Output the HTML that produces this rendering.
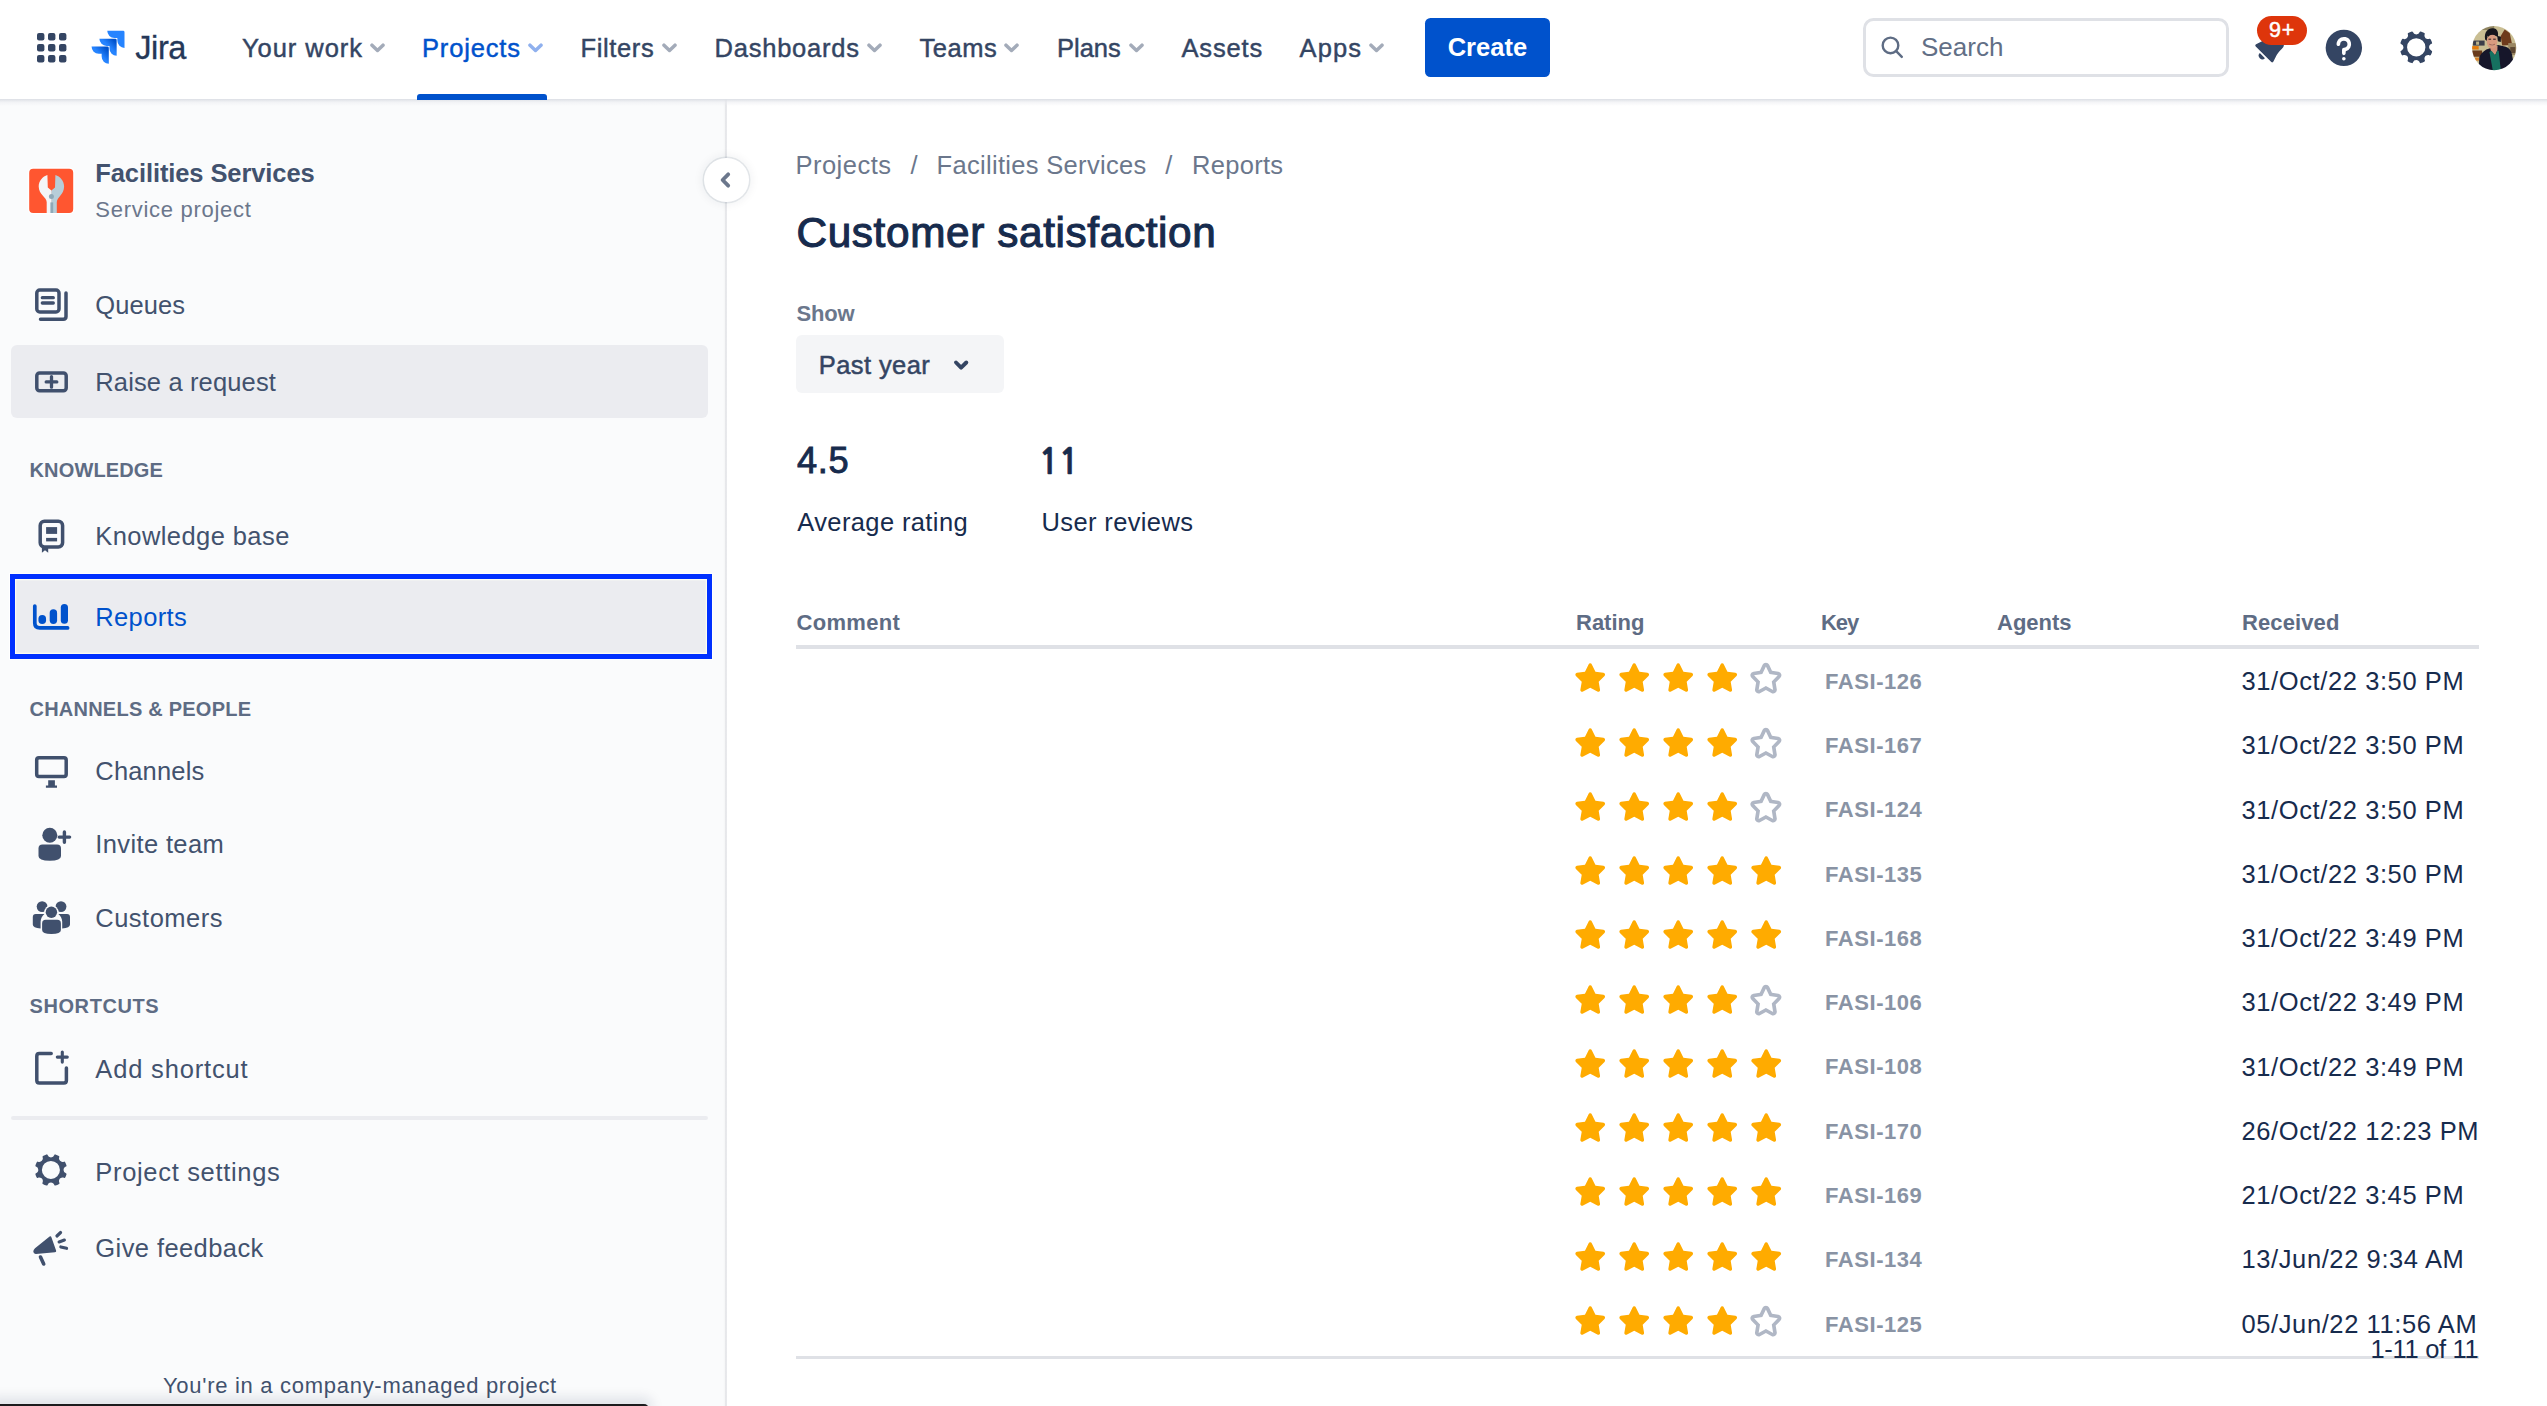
<!DOCTYPE html>
<html lang="en">
<head>
<meta charset="utf-8">
<title>Customer satisfaction - Facilities Services - Jira</title>
<style>
*{box-sizing:border-box;margin:0;padding:0}
html,body{width:2547px;height:1406px;overflow:hidden;background:#fff}
body{font-family:"Liberation Sans",Arial,sans-serif;color:#172B4D;position:relative}
.abs{position:absolute;white-space:nowrap;line-height:1}
svg{display:block;position:absolute;overflow:visible}

/* ---------- top navigation ---------- */
#nav{position:absolute;left:0;top:0;width:2547px;height:99px;background:#fff;z-index:5}
#navshadow{position:absolute;left:0;top:99px;width:2547px;height:7px;background:linear-gradient(#dcdfe5,rgba(235,236,240,.55) 45%,rgba(244,245,247,0));z-index:4}
.nv{position:absolute;top:32.6px;font-size:25.5px;font-weight:400;color:#344563;white-space:nowrap;line-height:30px;-webkit-text-stroke:.45px currentColor}
.nv.sel{color:#0052CC}
.chev{position:absolute;top:43px;width:15px;height:10px}
#create{position:absolute;left:1425px;top:18.2px;width:124.8px;height:58.4px;border-radius:5.5px;background:#0052CC;color:#fff;font-size:25.5px;font-weight:700;line-height:59px;text-align:center}
#search{position:absolute;left:1863px;top:18.2px;width:366px;height:58.9px;border:3.3px solid #DFE1E6;border-radius:10.5px;background:#fff}
#search span{position:absolute;left:55px;top:11px;font-size:26px;line-height:30px;color:#626F86;letter-spacing:0}

/* ---------- sidebar ---------- */
#side{position:absolute;left:0;top:98px;width:725px;height:1308px;background:#FAFBFC}
#sideborder{position:absolute;left:723px;top:98px;width:4px;height:1308px;background:linear-gradient(90deg,#FAFBFC,#f5f6f7 48%,#e6e7ea 56%,#e8e9ec 90%,#fff)}
.si{position:absolute;left:95.3px;font-size:25.5px;line-height:30px;color:#42526E;white-space:nowrap}
.sh{position:absolute;left:29.5px;font-size:20px;line-height:24px;font-weight:700;color:#5E6C84;letter-spacing:.6px;white-space:nowrap}
.hl{position:absolute;left:11px;width:697px;background:#EBECF0;border-radius:6px}

/* ---------- main ---------- */
.bc{position:absolute;top:150px;font-size:25.5px;line-height:30px;color:#6B778C;white-space:nowrap}
.th{position:absolute;top:610px;font-size:21px;line-height:24px;font-weight:700;color:#5E6C84;white-space:nowrap}
.row{position:absolute;left:796px;width:1682px;height:64px}
.key{position:absolute;left:1028px;top:20px;font-size:21.5px;line-height:24px;font-weight:700;color:#8993A4;white-space:nowrap}
.rc{position:absolute;left:1445px;top:17px;font-size:25.5px;line-height:30px;color:#172B4D;white-space:nowrap}
.star{position:absolute;top:14px;width:36px;height:36px}
</style>
</head>
<body>

<!-- NAV -->
<div id="nav">

<svg width="0" height="0" style="position:absolute"><defs>
<symbol id="chev" viewBox="0 0 15 10"><path d="M2 2.2 L7.5 7.4 L13 2.2" fill="none" stroke="currentColor" stroke-width="3.5" stroke-linecap="round" stroke-linejoin="round"/></symbol>
<linearGradient id="jg1" x1="21.1" y1="10.8" x2="16.5" y2="15.5" gradientUnits="userSpaceOnUse"><stop offset=".18" stop-color="#0052CC"/><stop offset="1" stop-color="#2684FF"/></linearGradient>
<linearGradient id="jg2" x1="16.1" y1="16.2" x2="10.8" y2="21.3" gradientUnits="userSpaceOnUse"><stop offset=".18" stop-color="#0052CC"/><stop offset="1" stop-color="#2684FF"/></linearGradient>
<symbol id="gear" viewBox="0 0 24 24"><path d="M11.701 16.7a5.002 5.002 0 1 1 0-10.003 5.002 5.002 0 0 1 0 10.004m8.368-3.117a1.995 1.995 0 0 1-1.346-1.885c0-.876.563-1.613 1.345-1.885a.48.48 0 0 0 .315-.574 8.947 8.947 0 0 0-.836-1.993.477.477 0 0 0-.598-.195 2.04 2.04 0 0 1-1.29.08 1.988 1.988 0 0 1-1.404-1.395 2.04 2.04 0 0 1 .076-1.297.478.478 0 0 0-.196-.597 8.98 8.98 0 0 0-1.975-.826.479.479 0 0 0-.574.314 1.995 1.995 0 0 1-1.885 1.346 1.994 1.994 0 0 1-1.884-1.345.482.482 0 0 0-.575-.315c-.708.2-1.379.485-2.004.842a.47.47 0 0 0-.198.582A2.002 2.002 0 0 1 4.445 7.06a.478.478 0 0 0-.595.196 8.946 8.946 0 0 0-.833 1.994.48.48 0 0 0 .308.572 1.995 1.995 0 0 1 1.323 1.877c0 .867-.552 1.599-1.324 1.877a.479.479 0 0 0-.308.57 8.99 8.99 0 0 0 .723 1.79.477.477 0 0 0 .624.194c.595-.273 1.343-.264 2.104.238.117.077.225.185.302.3.527.8.512 1.58.198 2.188a.473.473 0 0 0 .168.628 8.946 8.946 0 0 0 2.11.897.474.474 0 0 0 .57-.313 1.995 1.995 0 0 1 1.886-1.353c.878 0 1.618.567 1.887 1.353a.475.475 0 0 0 .57.313 8.964 8.964 0 0 0 2.084-.883.473.473 0 0 0 .167-.631c-.318-.608-.337-1.393.191-2.195.077-.116.185-.225.302-.302.772-.511 1.527-.513 2.125-.23a.477.477 0 0 0 .628-.19 8.925 8.925 0 0 0 .728-1.793.478.478 0 0 0-.314-.573" fill-rule="evenodd"/></symbol>
</defs></svg>

<!-- app switcher -->
<svg style="left:37px;top:33px" width="30" height="30" viewBox="0 0 30 30" fill="#344563">
<rect x="0" y="0" width="7.4" height="7.4" rx="2"/><rect x="11" y="0" width="7.4" height="7.4" rx="2"/><rect x="22" y="0" width="7.4" height="7.4" rx="2"/>
<rect x="0" y="11" width="7.4" height="7.4" rx="2"/><rect x="11" y="11" width="7.4" height="7.4" rx="2"/><rect x="22" y="11" width="7.4" height="7.4" rx="2"/>
<rect x="0" y="22" width="7.4" height="7.4" rx="2"/><rect x="11" y="22" width="7.4" height="7.4" rx="2"/><rect x="22" y="22" width="7.4" height="7.4" rx="2"/>
</svg>

<!-- jira logo -->
<svg style="left:84.4px;top:23.2px" width="46.9" height="46.9" viewBox="0 0 32 32">
<path d="M26.7 5.333H15.873a4.887 4.887 0 0 0 4.887 4.887h1.994v1.926a4.887 4.887 0 0 0 4.886 4.883V6.273a.94.94 0 0 0-.94-.94z" fill="#2684FF"/>
<path d="M21.343 10.728H10.516a4.887 4.887 0 0 0 4.886 4.883h1.995v1.932a4.887 4.887 0 0 0 4.886 4.88V11.668a.94.94 0 0 0-.94-.94z" fill="url(#jg1)"/>
<path d="M15.983 16.12H5.156a4.887 4.887 0 0 0 4.886 4.887h2.001v1.926a4.887 4.887 0 0 0 4.88 4.88V17.06a.94.94 0 0 0-.94-.94z" fill="url(#jg2)"/>
</svg>
<span class="abs" style="left:135.2px;top:30px;font-size:32.6px;line-height:36px;color:#253858;letter-spacing:-.4px;-webkit-text-stroke:.3px #253858">Jira</span>
<span class="nv" style="left:242px;letter-spacing:0.94px">Your work</span>
<svg class="chev" style="left:369.5px;color:#A3ABB9"><use href="#chev"/></svg>
<span class="nv sel" style="left:422px;letter-spacing:0.84px">Projects</span>
<svg class="chev" style="left:528.0px;color:#8FB0EE"><use href="#chev"/></svg>
<span class="nv" style="left:580.5px;letter-spacing:0.63px">Filters</span>
<svg class="chev" style="left:661.5px;color:#A3ABB9"><use href="#chev"/></svg>
<span class="nv" style="left:714.5px;letter-spacing:0.78px">Dashboards</span>
<svg class="chev" style="left:866.8px;color:#A3ABB9"><use href="#chev"/></svg>
<span class="nv" style="left:919.5px;letter-spacing:0.52px">Teams</span>
<svg class="chev" style="left:1004.3px;color:#A3ABB9"><use href="#chev"/></svg>
<span class="nv" style="left:1057px;letter-spacing:0.0px">Plans</span>
<svg class="chev" style="left:1128.7px;color:#A3ABB9"><use href="#chev"/></svg>
<span class="nv" style="left:1181.5px;letter-spacing:0.83px">Assets</span>
<span class="nv" style="left:1299.5px;letter-spacing:1.16px">Apps</span>
<svg class="chev" style="left:1369.3px;color:#A3ABB9"><use href="#chev"/></svg>
<div style="position:absolute;left:417px;top:93.5px;width:130px;height:6px;background:#0052CC;border-radius:3px 3px 0 0"></div>
<div id="create">Create</div>
<div id="search">
<svg style="left:14.7px;top:15.3px" width="26" height="26" viewBox="0 0 26 26" fill="none" stroke="#5E6C84" stroke-width="2.4" stroke-linecap="round"><circle cx="9.5" cy="9.4" r="7.8"/><path d="M15.2 15.1 L20.8 20.9"/></svg>
<span>Search</span>
</div>

<!-- notifications -->
<svg style="left:2247.7px;top:25.8px" width="43.7" height="43.7" viewBox="0 0 24 24" fill="#344563"><path d="M6.485 17.669a2 2 0 0 0 2.829 0l-2.829-2.83a2 2 0 0 0 0 2.83zm4.897-12.191l-.725.725c-.782.782-2.21 1.813-3.206 2.311l-3.017 1.509c-.495.248-.584.774-.187 1.171l8.556 8.556c.398.396.922.313 1.171-.188l1.51-3.016c.494-.988 1.526-2.42 2.311-3.206l.725-.726a5.048 5.048 0 0 0 .64-6.356 1.01 1.01 0 1 0-1.354-1.494c-.023.025-.046.049-.066.075a5.043 5.043 0 0 0-2.788-.84 5.036 5.036 0 0 0-3.57 1.478z"/></svg>
<div style="position:absolute;left:2257px;top:16px;width:50px;height:29px;border-radius:15px;background:#DE350B;color:#fff;font-size:21.5px;font-weight:400;-webkit-text-stroke:.5px #fff;line-height:29px;text-align:center;letter-spacing:.8px">9+</div>

<!-- help -->
<svg style="left:2321.5px;top:25.7px" width="43.7" height="43.7" viewBox="0 0 24 24"><circle fill="#344563" cx="12" cy="12" r="10"/><circle fill="#fff" cx="12" cy="18" r="1"/><path d="M15.89 9.05a3.975 3.975 0 0 0-2.957-2.942C10.321 5.514 8.017 7.446 8 9.95l.005.147a.992.992 0 0 0 .982.904c.552 0 1-.447 1.002-.998a2.004 2.004 0 0 1 4.007-.002c0 1.102-.898 2-2.003 2H12a1 1 0 0 0-1 .987v2.014a1.001 1.001 0 0 0 2.004 0v-.782c0-.217.145-.399.35-.472A3.99 3.99 0 0 0 15.89 9.05" fill="#fff"/></svg>

<!-- settings -->
<svg style="left:2394.9px;top:25.5px" width="43.7" height="43.7" viewBox="0 0 24 24"><path d="M11.701 16.7a5.002 5.002 0 1 1 0-10.003 5.002 5.002 0 0 1 0 10.004m8.368-3.117a1.995 1.995 0 0 1-1.346-1.885c0-.876.563-1.613 1.345-1.885a.48.48 0 0 0 .315-.574 8.947 8.947 0 0 0-.836-1.993.477.477 0 0 0-.598-.195 2.04 2.04 0 0 1-1.29.08 1.988 1.988 0 0 1-1.404-1.395 2.04 2.04 0 0 1 .076-1.297.478.478 0 0 0-.196-.597 8.98 8.98 0 0 0-1.975-.826.479.479 0 0 0-.574.314 1.995 1.995 0 0 1-1.885 1.346 1.994 1.994 0 0 1-1.884-1.345.482.482 0 0 0-.575-.315c-.708.2-1.379.485-2.004.842a.47.47 0 0 0-.198.582A2.002 2.002 0 0 1 4.445 7.06a.478.478 0 0 0-.595.196 8.946 8.946 0 0 0-.833 1.994.48.48 0 0 0 .308.572 1.995 1.995 0 0 1 1.323 1.877c0 .867-.552 1.599-1.324 1.877a.479.479 0 0 0-.308.57 8.99 8.99 0 0 0 .723 1.79.477.477 0 0 0 .624.194c.595-.273 1.343-.264 2.104.238.117.077.225.185.302.3.527.8.512 1.58.198 2.188a.473.473 0 0 0 .168.628 8.946 8.946 0 0 0 2.11.897.474.474 0 0 0 .57-.313 1.995 1.995 0 0 1 1.886-1.353c.878 0 1.618.567 1.887 1.353a.475.475 0 0 0 .57.313 8.964 8.964 0 0 0 2.084-.883.473.473 0 0 0 .167-.631c-.318-.608-.337-1.393.191-2.195.077-.116.185-.225.302-.302.772-.511 1.527-.513 2.125-.23a.477.477 0 0 0 .628-.19 8.925 8.925 0 0 0 .728-1.793.478.478 0 0 0-.314-.573" fill="#344563" fill-rule="evenodd"/></svg>

<!-- avatar -->
<svg style="left:2471.7px;top:25.5px" width="44.3" height="44.2" viewBox="0 0 44 44">
<defs><clipPath id="avc"><circle cx="22" cy="22" r="22"/></clipPath><filter id="avb" x="-10%" y="-10%" width="120%" height="120%"><feGaussianBlur stdDeviation=".55"/></filter></defs>
<g clip-path="url(#avc)"><g filter="url(#avb)">
<rect x="-2" y="-2" width="48" height="48" fill="#C9BE93"/>
<path d="M28.5 10 L32.5 3.5 L37.5 7 L40 19 L30 19.5 Z" fill="#6E3B1E"/>
<rect x="36" y="17" width="9" height="12" fill="#9A8763"/>
<rect x="38" y="21" width="5" height="6" fill="#5B4632"/>
<rect x="10" y="0" width="12" height="4" fill="#8F8460"/>
<rect x="1" y="14.5" width="11.5" height="5" fill="#3B3D4A"/>
<rect x="4" y="15.5" width="3" height="3.2" fill="#B8B08A"/>
<rect x="0" y="20" width="6.6" height="3.4" fill="#E37C0E"/>
<rect x="0" y="24.4" width="10" height="6.2" fill="#6B3A1E"/>
<rect x="3" y="31.5" width="4" height="3" fill="#D9822B"/>
<path d="M6.5 46 L7.2 31 Q9 26.5 14.2 23.4 L19.5 21.6 L26 18.8 L33.5 20.6 Q38.4 22.2 39.8 28.5 L43 46 Z" fill="#15162A"/>
<path d="M17.6 20 L25.4 20 L25.2 24 L22.9 29.2 L18.8 25 Z" fill="#D2937A"/>
<path d="M17.3 25.8 L19.3 24.6 L22.9 29.2 L25.5 23.8 L26.6 25.2 L28.8 46 L21 46 Z" fill="#157160"/>
<path d="M13 13.5 C11.6 5.2 16.8 1.8 21 2.3 C25.4 2.5 26.4 7 25.8 10 L28.8 10.8 L28.6 16 L25.6 15.2 L25.2 10.6 C22 8.6 18.2 8.6 15.2 10 L14.7 15 Z" fill="#17161F"/>
<ellipse cx="19.9" cy="15.4" rx="5.3" ry="7" fill="#D89B80"/>
<path d="M15.3 12.2 C16 9.4 19 8.2 21.5 8.4 C23.5 8.6 24.8 9.6 25.2 11 L25.3 8 L16 7 Z" fill="#17161F"/>
<rect x="16.4" y="12.6" width="2.6" height="1.1" fill="#3A2A26"/><rect x="21" y="12.6" width="2.6" height="1.1" fill="#3A2A26"/>
<path d="M17.2 18.2 Q20 20.4 22.8 18.2 Q20 19.3 17.2 18.2 Z" fill="#F4E6DE" stroke="#8E5546" stroke-width=".5"/>
</g></g></svg>
</div>
<div id="navshadow"></div>

<!-- SIDEBAR -->
<div id="side"></div>
<div id="sideborder"></div>

<div class="hl" style="top:345.2px;height:72.8px"></div>
<div style="position:absolute;left:9.8px;top:574.2px;width:702.2px;height:84.8px;background:#EBECF0;border:5px solid #0030FF;outline:1.2px solid rgba(255,255,255,.95);box-shadow:inset 0 0 0 1.2px #FDFDF2"></div>
<div style="position:absolute;left:11px;top:1116px;width:697px;height:3.6px;background:#EBECF0;border-radius:2px"></div>

<!-- project header -->
<span class="abs" style="left:95.3px;top:158px;font-size:25.5px;line-height:30px;font-weight:700;color:#42526E;letter-spacing:-.1px">Facilities Services</span>
<span class="abs" style="left:95.3px;top:197.2px;font-size:22px;line-height:26px;color:#6B778C;letter-spacing:.72px">Service project</span>

<svg style="left:0;top:0" width="760" height="1406" viewBox="0 0 760 1406">
<!-- project avatar -->
<rect x="27.7" y="167.3" width="47" height="47" rx="5.5" fill="#fff"/>
<rect x="29.2" y="168.8" width="44" height="44.2" rx="4" fill="#FF5630"/>
<g transform="translate(29.2 168.8)">
<path d="M18.2 6.3 L18.6 18.6 L22.2 21.8 L22.6 22.1 L22.6 44.2 L17.5 44.2 L17.5 33.5 C17.5 28.5 9.5 26 9.5 17.8 C9.5 12 13.5 7.8 18.2 6.3 Z" fill="#F4F5F7"/>
<path d="M26.2 6.3 L25.8 18.6 L22.2 21.8 L22.2 44.2 L27.6 44.2 L27.6 33.5 C27.6 28.5 34.9 26 34.9 17.8 C34.9 12 30.9 7.8 26.2 6.3 Z" fill="#B7CDD8"/>
<circle cx="22.2" cy="27.6" r="2.5" fill="#8FA9B8"/>
<rect x="21.2" y="33.6" width="2.8" height="10.6" fill="#8FA9B8"/>
</g>

<!-- queues -->
<g fill="none" stroke="#40506D" stroke-width="3.5" stroke-linecap="round" stroke-linejoin="round">
<rect x="36.8" y="290" width="22.2" height="22" rx="3"/>
<path d="M42.3 297.7 H53.3 M42.3 303 H53.3" stroke-width="3.3"/>
<path d="M66 293 V316.5 Q66 319.2 63.3 319.2 H40.5"/>
</g>
<!-- raise a request -->
<g fill="none" stroke="#40506D" stroke-width="3.5" stroke-linecap="round" stroke-linejoin="round">
<rect x="36.8" y="373" width="29.4" height="17.8" rx="2.8"/>
<path d="M46.2 381.9 H56.8 M51.5 376.6 V387.2" stroke-width="3.3"/>
</g>
<!-- knowledge base -->
<g fill="none" stroke="#40506D" stroke-width="3.5" stroke-linejoin="round">
<rect x="40.2" y="521.2" width="22.4" height="25.8" rx="4.2"/>
</g>
<rect x="46.1" y="527.1" width="11" height="6.8" fill="#40506D"/><rect x="46.1" y="537.9" width="11" height="3.5" fill="#40506D"/>
<path d="M41.9 547.5 H48.2 V552.8 L45 550.3 L41.9 552.8 Z" fill="#40506D"/>
<!-- reports -->
<g fill="none" stroke="#0052CC" stroke-linecap="round" stroke-linejoin="round">
<path d="M34.8 606 V623 Q34.8 627.9 39.7 627.9 H67.6" stroke-width="3.7"/>
<path d="M42.25 618.7 V620.2" stroke-width="7.6"/>
<path d="M53.4 612.9 V620.2" stroke-width="7.4"/>
<path d="M64.4 607.6 V620.2" stroke-width="7.2"/>
</g>
<!-- channels -->
<rect x="36.7" y="757.8" width="29.5" height="18.7" rx="2.2" fill="none" stroke="#40506D" stroke-width="3.5"/>
<path d="M48.2 780.3 H54.9 V785.6 H57 V787.8 H45.9 V785.6 H48.2 Z" fill="#40506D"/>
<!-- invite team -->
<circle cx="49.8" cy="835.3" r="7.5" fill="#40506D"/>
<path d="M42.5 844.6 H57 Q61 844.6 61 848.6 V856 Q61 860.7 49.8 860.7 Q38.5 860.7 38.5 856 V848.6 Q38.5 844.6 42.5 844.6 Z" fill="#40506D"/>
<path d="M59.2 837.1 H69.6 M64.4 831.9 V842.3" fill="none" stroke="#40506D" stroke-width="3.4" stroke-linecap="round"/>
<!-- customers -->
<circle cx="42.1" cy="906.6" r="5.4" fill="#40506D"/><circle cx="61" cy="906.6" r="5.4" fill="#40506D"/>
<path d="M35.8 914.1 H44.5 Q41 917 40.6 921.5 V928.6 Q32.8 927.8 32.8 924.5 V917.1 Q32.8 914.1 35.8 914.1 Z" fill="#40506D"/>
<path d="M67 914.1 H58.3 Q61.8 917 62.2 921.5 V928.6 Q70 927.8 70 924.5 V917.1 Q70 914.1 67 914.1 Z" fill="#40506D"/>
<circle cx="51.4" cy="912.3" r="7.2" fill="#FAFBFC"/>
<circle cx="51.4" cy="912.3" r="5.7" fill="#40506D"/>
<path d="M45.6 919.8 H57.3 Q60.9 919.8 60.9 923.4 V930 Q60.9 934 51.4 934 Q42.1 934 42.1 930 V923.4 Q42.1 919.8 45.6 919.8 Z" fill="#40506D"/>
<!-- add shortcut -->
<g fill="none" stroke="#40506D" stroke-linecap="round" stroke-linejoin="round">
<path d="M51.2 1053.4 H39.3 Q36.8 1053.4 36.8 1055.9 V1080.6 Q36.8 1083.1 39.3 1083.1 H63.9 Q66.4 1083.1 66.4 1080.6 V1068" stroke-width="3.5"/>
<path d="M57.3 1057.1 H67.3 M62.3 1052.1 V1062.1" stroke-width="3.1"/>
</g>
<!-- feedback -->
<path d="M35 1248.2 L49.6 1236.6 Q50.9 1235.6 51.4 1237.2 L56.1 1250.6 Q56.6 1252.1 55 1252.3 L36 1253.9 Q33.6 1254.1 33.3 1251.8 Q33.2 1249.7 35 1248.2 Z" fill="#40506D"/>
<g fill="none" stroke="#40506D" stroke-linecap="round">
<path d="M40.5 1257 L43.7 1264" stroke-width="3.6"/>
<path d="M56.9 1236 L60.6 1232.5 M59.1 1242 L64.4 1240 M60.8 1246.9 L66.6 1248.3" stroke-width="3.1"/>
</g>
</svg>

<!-- project settings gear -->
<svg style="left:29.9px;top:1148.7px" width="43" height="43" viewBox="0 0 24 24"><use href="#gear" fill="#40506D"/></svg>

<!-- collapse button -->
<div style="position:absolute;left:704.2px;top:157.6px;width:44.7px;height:44.7px;border-radius:50%;background:#fff;box-shadow:0 0 0 1.5px rgba(9,30,66,.085),0 0 9px 3px rgba(9,30,66,.05);z-index:3"></div>
<svg style="left:715.3px;top:170px;z-index:4" width="20" height="20" viewBox="0 0 20 20"><path d="M13.2 4.3 L7.6 10 L13.2 15.7" fill="none" stroke="#6B778C" stroke-width="3.8" stroke-linecap="round" stroke-linejoin="round"/></svg>
<span class="sh" style="top:458.3px;letter-spacing:0.15px">KNOWLEDGE</span>
<span class="sh" style="top:697.0px;letter-spacing:0.23px">CHANNELS &amp; PEOPLE</span>
<span class="sh" style="top:994.0px;letter-spacing:0.59px">SHORTCUTS</span>
<span class="si" style="top:289.6px;letter-spacing:0.06px">Queues</span>
<span class="si" style="top:367.1px;letter-spacing:0.14px">Raise a request</span>
<span class="si" style="top:521.1px;letter-spacing:0.42px">Knowledge base</span>
<span class="si" style="top:602.2px;letter-spacing:0.35px;color:#0052CC">Reports</span>
<span class="si" style="top:756.3px;letter-spacing:0.18px">Channels</span>
<span class="si" style="top:829.4px;letter-spacing:0.37px">Invite team</span>
<span class="si" style="top:903.2px;letter-spacing:0.49px">Customers</span>
<span class="si" style="top:1053.5px;letter-spacing:0.83px">Add shortcut</span>
<span class="si" style="top:1156.5px;letter-spacing:0.68px">Project settings</span>
<span class="si" style="top:1233.4px;letter-spacing:0.42px">Give feedback</span>
<span class="abs" style="left:163px;top:1373px;font-size:22px;line-height:26px;color:#42526E;letter-spacing:.71px">You're in a company-managed project</span>
<div style="position:absolute;left:-6px;top:1404.3px;width:655px;height:8px;background:#1c1c1e;border-radius:0 5px 0 0;box-shadow:0 -3px 12px 4px rgba(9,30,66,.10);z-index:6"></div>


<!-- MAIN -->
<div id="main">

<svg width="0" height="0" style="position:absolute"><defs>
<symbol id="sf" viewBox="0 0 24 24"><path d="M12.072 17.284l-3.905 2.053a1 1 0 0 1-1.451-1.054l.745-4.349-3.159-3.08a1 1 0 0 1 .554-1.705l4.366-.635 1.953-3.956a1 1 0 0 1 1.794 0l1.952 3.956 4.366.635a1 1 0 0 1 .555 1.705l-3.16 3.08.746 4.349a1 1 0 0 1-1.45 1.054l-3.906-2.053z" fill="#FFAB00"/></symbol>
<symbol id="se" viewBox="0 0 24 24"><path d="M12 16.373l3.98 2.193-.76-4.655 3.276-3.347-4.524-.69L12 5.687l-1.972 4.189-4.524.689 3.276 3.347-.76 4.655L12 16.373zm0 2.283l-3.016 1.662a2 2 0 0 1-2.939-2.074l.599-3.67-2.57-2.626a2 2 0 0 1 1.129-3.376l3.471-.53 1.516-3.22a2 2 0 0 1 3.62 0l1.516 3.22 3.471.53a2 2 0 0 1 1.128 3.376l-2.569 2.626.599 3.67a2 2 0 0 1-2.939 2.074L12 18.656z" fill="#B0B7C5"/></symbol>
</defs></svg>
<span class="bc" style="left:795.5px;top:150.1px;letter-spacing:.48px">Projects</span>
<span class="bc" style="left:910.5px;top:150.1px">/</span>
<span class="bc" style="left:936.5px;top:150.1px;letter-spacing:.32px">Facilities Services</span>
<span class="bc" style="left:1165.3px;top:150.1px">/</span>
<span class="bc" style="left:1192.0px;top:150.1px;letter-spacing:.3px">Reports</span>
<span class="abs" style="left:796.5px;top:208.9px;font-size:42.3px;line-height:48px;color:#172B4D;letter-spacing:.63px;-webkit-text-stroke:1.1px #172B4D">Customer satisfaction</span>
<span class="abs" style="left:796.5px;top:300.8px;font-size:22px;line-height:26px;font-weight:700;color:#6B778C;letter-spacing:-.19px">Show</span>
<div style="position:absolute;left:796.4px;top:335.2px;width:208px;height:58.2px;border-radius:6px;background:#F4F5F7"></div>
<span class="abs" style="left:818.8px;top:350.0px;font-size:25.5px;line-height:30px;color:#344563;letter-spacing:.4px;-webkit-text-stroke:.5px #344563">Past year</span>
<svg style="left:951px;top:357px" width="20" height="16" viewBox="0 0 20 16"><path d="M5 5.5 L10.1 10.7 L15.3 5.5" fill="none" stroke="#344563" stroke-width="3.9" stroke-linecap="round" stroke-linejoin="round"/></svg>
<span class="abs" style="left:797px;top:440.2px;font-size:36.2px;line-height:42px;color:#172B4D;letter-spacing:.64px;-webkit-text-stroke:.9px #172B4D">4.5</span>
<span class="abs" id="n11" style="-webkit-text-stroke:.6px #172B4D;left:1038.4px;top:440.7px;font-family:NanumGothic,'Liberation Sans',sans-serif;font-weight:700;font-size:34.2px;line-height:42px;color:#172B4D;letter-spacing:-.6px">11</span>
<span class="abs" style="left:797.3px;top:507.1px;font-size:25.5px;line-height:30px;color:#172B4D;letter-spacing:.38px">Average rating</span>
<span class="abs" style="left:1041.5px;top:507.1px;font-size:25.5px;line-height:30px;color:#172B4D;letter-spacing:.37px">User reviews</span>
<span class="th" style="left:796.5px;top:610.4px;font-size:22px;line-height:26px;letter-spacing:0.32px">Comment</span>
<span class="th" style="left:1576px;top:610.4px;font-size:22px;line-height:26px;letter-spacing:0px">Rating</span>
<span class="th" style="left:1821px;top:610.4px;font-size:22px;line-height:26px;letter-spacing:-1.1px">Key</span>
<span class="th" style="left:1997px;top:610.4px;font-size:22px;line-height:26px;letter-spacing:0px">Agents</span>
<span class="th" style="left:2242px;top:610.4px;font-size:22px;line-height:26px;letter-spacing:.1px">Received</span>
<div style="position:absolute;left:796px;top:645.2px;width:1683px;height:3.7px;background:#DFE1E6"></div>
<svg style="left:1568.2px;top:656.2px" width="44.16" height="44.16"><use href="#sf"/></svg><svg style="left:1612.1px;top:656.2px" width="44.16" height="44.16"><use href="#sf"/></svg><svg style="left:1655.9px;top:656.2px" width="44.16" height="44.16"><use href="#sf"/></svg><svg style="left:1699.7px;top:656.2px" width="44.16" height="44.16"><use href="#sf"/></svg><svg style="left:1744.3px;top:656.3px" width="43.8" height="43.8"><use href="#se"/></svg>
<span class="abs" style="left:1825px;top:668.9px;font-size:22px;line-height:26px;font-weight:700;color:#8993A4;letter-spacing:.56px">FASI-126</span><span class="abs" style="left:2241.5px;top:666.1px;font-size:25.5px;line-height:30px;color:#172B4D;letter-spacing:.6px">31/Oct/22 3:50 PM</span>
<svg style="left:1568.2px;top:720.5px" width="44.16" height="44.16"><use href="#sf"/></svg><svg style="left:1612.1px;top:720.5px" width="44.16" height="44.16"><use href="#sf"/></svg><svg style="left:1655.9px;top:720.5px" width="44.16" height="44.16"><use href="#sf"/></svg><svg style="left:1699.7px;top:720.5px" width="44.16" height="44.16"><use href="#sf"/></svg><svg style="left:1744.3px;top:720.6px" width="43.8" height="43.8"><use href="#se"/></svg>
<span class="abs" style="left:1825px;top:733.1px;font-size:22px;line-height:26px;font-weight:700;color:#8993A4;letter-spacing:.56px">FASI-167</span><span class="abs" style="left:2241.5px;top:730.3px;font-size:25.5px;line-height:30px;color:#172B4D;letter-spacing:.6px">31/Oct/22 3:50 PM</span>
<svg style="left:1568.2px;top:784.8px" width="44.16" height="44.16"><use href="#sf"/></svg><svg style="left:1612.1px;top:784.8px" width="44.16" height="44.16"><use href="#sf"/></svg><svg style="left:1655.9px;top:784.8px" width="44.16" height="44.16"><use href="#sf"/></svg><svg style="left:1699.7px;top:784.8px" width="44.16" height="44.16"><use href="#sf"/></svg><svg style="left:1744.3px;top:784.8px" width="43.8" height="43.8"><use href="#se"/></svg>
<span class="abs" style="left:1825px;top:797.4px;font-size:22px;line-height:26px;font-weight:700;color:#8993A4;letter-spacing:.56px">FASI-124</span><span class="abs" style="left:2241.5px;top:794.6px;font-size:25.5px;line-height:30px;color:#172B4D;letter-spacing:.6px">31/Oct/22 3:50 PM</span>
<svg style="left:1568.2px;top:849.0px" width="44.16" height="44.16"><use href="#sf"/></svg><svg style="left:1612.1px;top:849.0px" width="44.16" height="44.16"><use href="#sf"/></svg><svg style="left:1655.9px;top:849.0px" width="44.16" height="44.16"><use href="#sf"/></svg><svg style="left:1699.7px;top:849.0px" width="44.16" height="44.16"><use href="#sf"/></svg><svg style="left:1743.5px;top:849.0px" width="44.16" height="44.16"><use href="#sf"/></svg>
<span class="abs" style="left:1825px;top:861.7px;font-size:22px;line-height:26px;font-weight:700;color:#8993A4;letter-spacing:.56px">FASI-135</span><span class="abs" style="left:2241.5px;top:858.8px;font-size:25.5px;line-height:30px;color:#172B4D;letter-spacing:.6px">31/Oct/22 3:50 PM</span>
<svg style="left:1568.2px;top:913.3px" width="44.16" height="44.16"><use href="#sf"/></svg><svg style="left:1612.1px;top:913.3px" width="44.16" height="44.16"><use href="#sf"/></svg><svg style="left:1655.9px;top:913.3px" width="44.16" height="44.16"><use href="#sf"/></svg><svg style="left:1699.7px;top:913.3px" width="44.16" height="44.16"><use href="#sf"/></svg><svg style="left:1743.5px;top:913.3px" width="44.16" height="44.16"><use href="#sf"/></svg>
<span class="abs" style="left:1825px;top:925.9px;font-size:22px;line-height:26px;font-weight:700;color:#8993A4;letter-spacing:.56px">FASI-168</span><span class="abs" style="left:2241.5px;top:923.1px;font-size:25.5px;line-height:30px;color:#172B4D;letter-spacing:.6px">31/Oct/22 3:49 PM</span>
<svg style="left:1568.2px;top:977.6px" width="44.16" height="44.16"><use href="#sf"/></svg><svg style="left:1612.1px;top:977.6px" width="44.16" height="44.16"><use href="#sf"/></svg><svg style="left:1655.9px;top:977.6px" width="44.16" height="44.16"><use href="#sf"/></svg><svg style="left:1699.7px;top:977.6px" width="44.16" height="44.16"><use href="#sf"/></svg><svg style="left:1744.3px;top:977.6px" width="43.8" height="43.8"><use href="#se"/></svg>
<span class="abs" style="left:1825px;top:990.2px;font-size:22px;line-height:26px;font-weight:700;color:#8993A4;letter-spacing:.56px">FASI-106</span><span class="abs" style="left:2241.5px;top:987.4px;font-size:25.5px;line-height:30px;color:#172B4D;letter-spacing:.6px">31/Oct/22 3:49 PM</span>
<svg style="left:1568.2px;top:1041.8px" width="44.16" height="44.16"><use href="#sf"/></svg><svg style="left:1612.1px;top:1041.8px" width="44.16" height="44.16"><use href="#sf"/></svg><svg style="left:1655.9px;top:1041.8px" width="44.16" height="44.16"><use href="#sf"/></svg><svg style="left:1699.7px;top:1041.8px" width="44.16" height="44.16"><use href="#sf"/></svg><svg style="left:1743.5px;top:1041.8px" width="44.16" height="44.16"><use href="#sf"/></svg>
<span class="abs" style="left:1825px;top:1054.4px;font-size:22px;line-height:26px;font-weight:700;color:#8993A4;letter-spacing:.56px">FASI-108</span><span class="abs" style="left:2241.5px;top:1051.6px;font-size:25.5px;line-height:30px;color:#172B4D;letter-spacing:.6px">31/Oct/22 3:49 PM</span>
<svg style="left:1568.2px;top:1106.1px" width="44.16" height="44.16"><use href="#sf"/></svg><svg style="left:1612.1px;top:1106.1px" width="44.16" height="44.16"><use href="#sf"/></svg><svg style="left:1655.9px;top:1106.1px" width="44.16" height="44.16"><use href="#sf"/></svg><svg style="left:1699.7px;top:1106.1px" width="44.16" height="44.16"><use href="#sf"/></svg><svg style="left:1743.5px;top:1106.1px" width="44.16" height="44.16"><use href="#sf"/></svg>
<span class="abs" style="left:1825px;top:1118.7px;font-size:22px;line-height:26px;font-weight:700;color:#8993A4;letter-spacing:.56px">FASI-170</span><span class="abs" style="left:2241.5px;top:1115.9px;font-size:25.5px;line-height:30px;color:#172B4D;letter-spacing:.6px">26/Oct/22 12:23 PM</span>
<svg style="left:1568.2px;top:1170.3px" width="44.16" height="44.16"><use href="#sf"/></svg><svg style="left:1612.1px;top:1170.3px" width="44.16" height="44.16"><use href="#sf"/></svg><svg style="left:1655.9px;top:1170.3px" width="44.16" height="44.16"><use href="#sf"/></svg><svg style="left:1699.7px;top:1170.3px" width="44.16" height="44.16"><use href="#sf"/></svg><svg style="left:1743.5px;top:1170.3px" width="44.16" height="44.16"><use href="#sf"/></svg>
<span class="abs" style="left:1825px;top:1183.0px;font-size:22px;line-height:26px;font-weight:700;color:#8993A4;letter-spacing:.56px">FASI-169</span><span class="abs" style="left:2241.5px;top:1180.1px;font-size:25.5px;line-height:30px;color:#172B4D;letter-spacing:.6px">21/Oct/22 3:45 PM</span>
<svg style="left:1568.2px;top:1234.6px" width="44.16" height="44.16"><use href="#sf"/></svg><svg style="left:1612.1px;top:1234.6px" width="44.16" height="44.16"><use href="#sf"/></svg><svg style="left:1655.9px;top:1234.6px" width="44.16" height="44.16"><use href="#sf"/></svg><svg style="left:1699.7px;top:1234.6px" width="44.16" height="44.16"><use href="#sf"/></svg><svg style="left:1743.5px;top:1234.6px" width="44.16" height="44.16"><use href="#sf"/></svg>
<span class="abs" style="left:1825px;top:1247.2px;font-size:22px;line-height:26px;font-weight:700;color:#8993A4;letter-spacing:.56px">FASI-134</span><span class="abs" style="left:2241.5px;top:1244.4px;font-size:25.5px;line-height:30px;color:#172B4D;letter-spacing:.6px">13/Jun/22 9:34 AM</span>
<svg style="left:1568.2px;top:1298.8px" width="44.16" height="44.16"><use href="#sf"/></svg><svg style="left:1612.1px;top:1298.8px" width="44.16" height="44.16"><use href="#sf"/></svg><svg style="left:1655.9px;top:1298.8px" width="44.16" height="44.16"><use href="#sf"/></svg><svg style="left:1699.7px;top:1298.8px" width="44.16" height="44.16"><use href="#sf"/></svg><svg style="left:1744.3px;top:1298.9px" width="43.8" height="43.8"><use href="#se"/></svg>
<span class="abs" style="left:1825px;top:1311.5px;font-size:22px;line-height:26px;font-weight:700;color:#8993A4;letter-spacing:.56px">FASI-125</span><span class="abs" style="left:2241.5px;top:1308.7px;font-size:25.5px;line-height:30px;color:#172B4D;letter-spacing:.6px">05/Jun/22 11:56 AM</span>
<span class="abs" style="right:68.5px;top:1334.1px;font-size:25.5px;line-height:30px;color:#172B4D;letter-spacing:-.3px;z-index:2">1-11 of 11</span>
<div style="position:absolute;left:796px;top:1356px;width:1683px;height:3.4px;background:#DFE1E6"></div>
</div>

</body>
</html>
